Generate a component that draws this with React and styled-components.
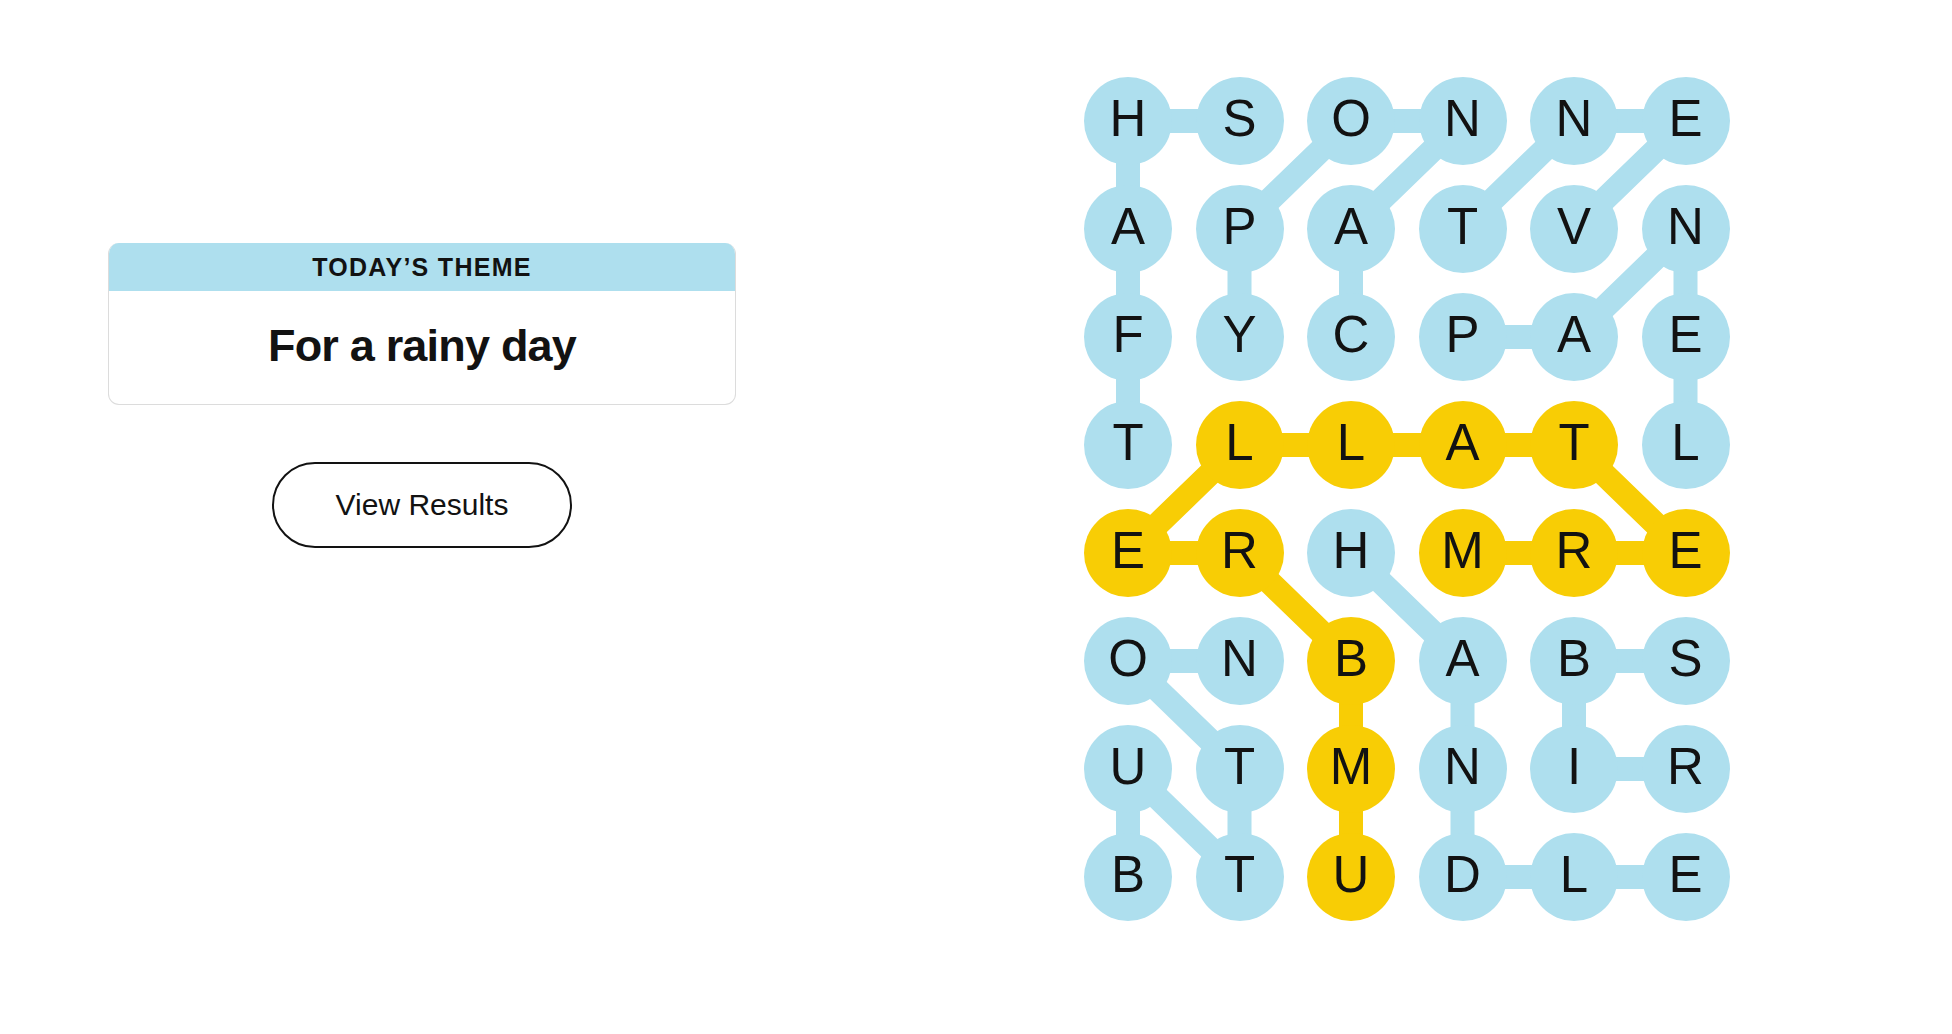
import React from 'react';
import styled, { createGlobalStyle } from 'styled-components';

const BLUE = '#aedfee';
const GOLD = '#f8cd05';
const INK = '#121212';

const COL_STEP = 111.5;
const ROW_STEP = 108;
const CELL = 88;

const rows = [
  'HSONNE',
  'APATVN',
  'FYCPAE',
  'TLLATL',
  'ERHMRE',
  'ONBABS',
  'UTMNIR',
  'BTUDLE',
];

// each found word as a path of [row, col]
const words = [
  { kind: 'theme', path: [[0, 1], [0, 0], [1, 0], [2, 0], [3, 0]] },
  { kind: 'theme', path: [[2, 2], [1, 2], [0, 3], [0, 2], [1, 1], [2, 1]] },
  { kind: 'theme', path: [[1, 4], [0, 5], [0, 4], [1, 3]] },
  { kind: 'theme', path: [[2, 3], [2, 4], [1, 5], [2, 5], [3, 5]] },
  { kind: 'theme', path: [[4, 2], [5, 3], [6, 3], [7, 3], [7, 4], [7, 5]] },
  { kind: 'theme', path: [[6, 5], [6, 4], [5, 4], [5, 5]] },
  { kind: 'theme', path: [[7, 0], [6, 0], [7, 1], [6, 1], [5, 0], [5, 1]] },
  {
    kind: 'spangram',
    path: [[7, 2], [6, 2], [5, 2], [4, 1], [4, 0], [3, 1], [3, 2], [3, 3], [3, 4], [4, 5], [4, 4], [4, 3]],
  },
];

const cellKind = {};
words.forEach((w) => w.path.forEach(([r, c]) => (cellKind[r + '-' + c] = w.kind)));

const GlobalStyle = createGlobalStyle`
  html, body {
    margin: 0;
    padding: 0;
    background: #ffffff;
  }
  body {
    font-family: "Liberation Sans", Arial, sans-serif;
    color: ${INK};
  }
`;

const Page = styled.main`
  display: flex;
  align-items: flex-start;
  gap: 348px;
  padding: 77px 0 0 108px;
`;

const Side = styled.section`
  width: 628px;
  margin-top: 166px;
  display: flex;
  flex-direction: column;
  align-items: center;
`;

const ThemeCard = styled.div`
  width: 100%;
  box-sizing: border-box;
  border: 1.5px solid #dcdcdc;
  border-top: none;
  border-radius: 11px;
  overflow: hidden;
`;

const ThemeHeader = styled.h2`
  margin: 0;
  height: 48px;
  background: ${BLUE};
  display: flex;
  align-items: center;
  justify-content: center;
  font-family: "Liberation Sans", Arial, sans-serif;
  font-size: 25px;
  font-weight: 700;
  letter-spacing: 1.3px;
  text-transform: uppercase;
  color: ${INK};
`;

const ThemeBody = styled.p`
  margin: 0;
  height: 113px;
  padding-bottom: 3px;
  box-sizing: border-box;
  display: flex;
  align-items: center;
  justify-content: center;
  font-family: "Liberation Sans", Arial, sans-serif;
  font-size: 45px;
  font-weight: 700;
  letter-spacing: -0.8px;
  color: ${INK};
`;

const ResultsButton = styled.button`
  margin-top: 57px;
  width: 300px;
  height: 86px;
  border: 2px solid ${INK};
  border-radius: 43px;
  background: #ffffff;
  font-family: "Liberation Sans", Arial, sans-serif;
  font-size: 30px;
  color: ${INK};
  cursor: pointer;
`;

const Board = styled.div`
  position: relative;
  display: grid;
  grid-template-columns: repeat(6, ${CELL}px);
  grid-template-rows: repeat(8, ${CELL}px);
  column-gap: ${COL_STEP - CELL}px;
  row-gap: ${ROW_STEP - CELL}px;
`;

const Strands = styled.svg`
  position: absolute;
  left: 0;
  top: 0;
  width: 100%;
  height: 100%;
  overflow: visible;
`;

const Letter = styled.button`
  position: relative;
  width: ${CELL}px;
  height: ${CELL}px;
  padding: 0 0 5px;
  border: none;
  border-radius: 50%;
  background: ${(p) => (p.$kind === 'spangram' ? GOLD : p.$kind === 'theme' ? BLUE : 'transparent')};
  display: flex;
  align-items: center;
  justify-content: center;
  font-family: "Liberation Sans", Arial, sans-serif;
  font-size: 51px;
  font-weight: 400;
  color: ${INK};
  text-transform: uppercase;
`;

const centre = ([r, c]) => [CELL / 2 + c * COL_STEP, CELL / 2 + r * ROW_STEP];

const App = () => (
  <>
    <GlobalStyle />
    <Page>
      <Side>
        <ThemeCard>
          <ThemeHeader>Today’s Theme</ThemeHeader>
          <ThemeBody>For a rainy day</ThemeBody>
        </ThemeCard>
        <ResultsButton>View Results</ResultsButton>
      </Side>

      <Board>
        <Strands>
          {words.map((w, i) => (
            <polyline
              key={i}
              points={w.path.map((p) => centre(p).join(',')).join(' ')}
              fill="none"
              stroke={w.kind === 'spangram' ? GOLD : BLUE}
              strokeWidth="24"
              strokeLinejoin="round"
            />
          ))}
        </Strands>
        {rows.map((row, r) =>
          row.split('').map((ch, c) => (
            <Letter key={r + '-' + c} $kind={cellKind[r + '-' + c]}>
              {ch}
            </Letter>
          ))
        )}
      </Board>
    </Page>
  </>
);

export default App;
